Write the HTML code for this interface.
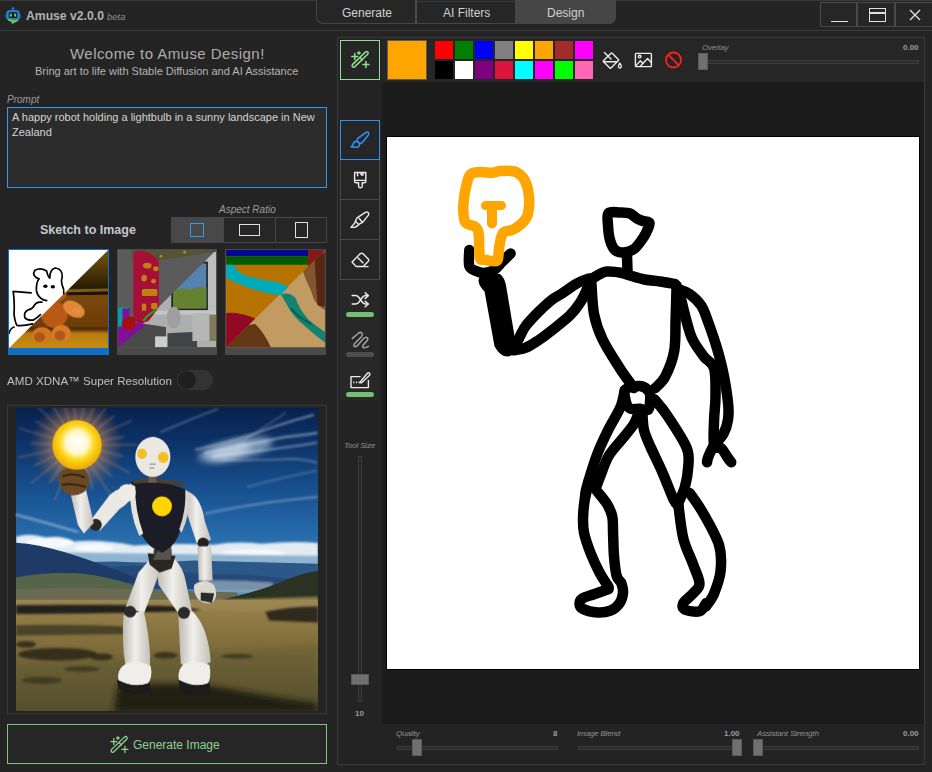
<!DOCTYPE html>
<html><head><meta charset="utf-8">
<style>
*{margin:0;padding:0;box-sizing:border-box}
html,body{width:932px;height:772px;overflow:hidden;background:#242424;font-family:"Liberation Sans",sans-serif;color:#bdbdbd}
.a{position:absolute}
.t{white-space:nowrap;position:absolute;line-height:1}
</style></head><body>
<!-- title bar -->
<div class="a" style="left:0;top:0;width:932px;height:1px;background:#3a3a3a"></div>
<div class="a" style="left:0;top:30px;width:932px;height:1px;background:#3c3c3c"></div>
<!-- logo -->
<svg class="a" style="left:2px;top:4px" width="24" height="24" viewBox="0 0 24 24">
  <circle cx="11" cy="4.6" r="1.3" fill="#1f7fd0"/>
  <path d="M4 10 Q4 6 8 6 H14 Q18 6 18 10 Q19 11.5 18.5 13 Q18.5 15 16 15.2 H6 Q3.5 15 3.5 13 Q3 11.5 4 10Z" fill="#1f7fd0"/>
  <rect x="6.8" y="8.3" width="8.4" height="5.6" rx="1" fill="#1b1b1b"/>
  <rect x="7.9" y="9.6" width="1.9" height="3.2" rx="0.8" fill="#6cc46c"/>
  <rect x="12.1" y="9.6" width="1.9" height="3.2" rx="0.8" fill="#6cc46c"/>
  <path d="M4.8 14.8 Q11 16.2 17.2 15 Q16.4 17.6 13.2 18.4 L9.4 20.2 L10 18.3 Q6.2 17.4 4.8 14.8Z" fill="#6cc46c"/>
</svg>
<div class="t" style="left:26px;top:10px;font-size:12.2px;font-weight:bold;color:#b0b0b0">Amuse v2.0.0</div><div class="t" style="left:107px;top:12px;font-size:9.5px;font-style:italic;color:#8e8e8e">beta</div>
<!-- tabs -->
<div class="a" style="left:316px;top:-1px;width:300px;height:25px;border:1px solid #464646;border-top:none;border-radius:0 0 7px 7px;background:#262626"></div>
<div class="a" style="left:415px;top:0;width:2px;height:24px;background:#4a4a4a"></div><div class="a" style="left:417px;top:1px;width:98px;height:1px;background:#3a3a3a"></div>
<div class="a" style="left:515px;top:0;width:101px;height:24px;background:#464646;border-radius:0 0 7px 0"></div>
<div class="t" style="left:342px;top:7px;font-size:12px;color:#d0d0d0">Generate</div>
<div class="t" style="left:443px;top:7px;font-size:12px;color:#d0d0d0">AI Filters</div>
<div class="t" style="left:547px;top:7px;font-size:12px;color:#d0d0d0">Design</div>
<!-- window buttons -->
<div class="a" style="left:820px;top:2px;width:38px;height:25px;border:1px solid #4a4a4a;border-right-width:2px;background:#262626"></div>
<div class="a" style="left:857px;top:2px;width:39px;height:25px;border:1px solid #4a4a4a;border-right-width:2px;background:#262626"></div>
<div class="a" style="left:895px;top:2px;width:40px;height:25px;border:1px solid #4a4a4a;background:#262626"></div>
<div class="a" style="left:831px;top:21px;width:17px;height:1px;background:#e0e0e0"></div>
<div class="a" style="left:869px;top:8px;width:17px;height:14px;border:1.5px solid #e0e0e0"></div>
<div class="a" style="left:870px;top:12px;width:15px;height:1.5px;background:#e0e0e0"></div>
<svg class="a" style="left:909px;top:9px" width="12" height="12" viewBox="0 0 12 12"><path d="M1 1L11 11M11 1L1 11" stroke="#e0e0e0" stroke-width="1.4"/></svg>

<!-- LEFT PANEL -->
<div class="t" style="left:70px;top:46px;font-size:15px;letter-spacing:0.45px;color:#acacac">Welcome to Amuse Design!</div>
<div class="t" style="left:35px;top:66px;font-size:11px;color:#b4b4b4">Bring art to life with Stable Diffusion and AI Assistance</div>
<div class="t" style="left:7px;top:95px;font-size:10px;font-style:italic;color:#9a9a9a">Prompt</div>
<div class="a" style="left:7px;top:107px;width:320px;height:81px;border:1px solid #3496ec;background:#2c2c2c"></div>
<div class="a" style="left:12px;top:110px;width:312px;font-size:11px;line-height:15px;color:#d4d4d4">A happy robot holding a lightbulb in a sunny landscape in New Zealand</div>

<div class="t" style="left:40px;top:224px;font-size:12.5px;font-weight:bold;color:#c4c8d0">Sketch to Image</div>
<div class="t" style="left:219px;top:205px;font-size:10px;font-style:italic;color:#9a9a9a">Aspect Ratio</div>
<div class="a" style="left:171px;top:217px;width:156px;height:26px;border:1px solid #464646;background:#262626"></div>
<div class="a" style="left:172px;top:218px;width:51px;height:24px;background:#484848"></div>
<div class="a" style="left:223px;top:217px;width:1px;height:26px;background:#464646"></div>
<div class="a" style="left:275px;top:217px;width:1px;height:26px;background:#464646"></div>
<div class="a" style="left:190px;top:223px;width:14px;height:14px;border:1.5px solid #2f9cf0"></div>
<div class="a" style="left:239px;top:224px;width:21px;height:12px;border:1.5px solid #e0e0e0"></div>
<div class="a" style="left:295px;top:222px;width:13px;height:16px;border:1.5px solid #e0e0e0"></div>

<!-- cards -->
<div class="a" style="left:8px;top:249px;width:101px;height:106px;background:#0f6fc6"></div><div class="a" style="left:117px;top:249px;width:100px;height:106px;background:#4a4a4a"></div><div class="a" style="left:225px;top:249px;width:101px;height:106px;background:#4a4a4a"></div><svg class="a" style="left:0;top:240px" width="120" height="120" viewBox="0 0 772 772"><defs><clipPath id="c1"><rect x="58" y="65" width="637" height="630"/></clipPath>
<linearGradient id="c1bg" x1="0" y1="0" x2="0" y2="1"><stop offset="0" stop-color="#8a6410"/><stop offset="0.2" stop-color="#5a420a"/><stop offset="0.4" stop-color="#2a1c04"/><stop offset="0.45" stop-color="#7a4a0c"/><stop offset="0.75" stop-color="#6a3a08"/><stop offset="0.78" stop-color="#b87c10"/><stop offset="1" stop-color="#d49a18"/></linearGradient>
<filter id="c1b"><feGaussianBlur stdDeviation="3"/></filter></defs><g clip-path="url(#c1)"><rect x="0" y="0" width="772" height="772" fill="url(#c1bg)"/><path d="M420 318 L700 312 L700 332 L420 336Z" fill="#8a6a18" opacity="0.8"/><path d="M420 336 L700 332 L700 352 L420 356Z" fill="#1e1204"/><path d="M58 560 L700 560 L700 575 L58 575Z" fill="#4a2a06" opacity="0.8"/><g filter="url(#c1b)"><ellipse cx="350" cy="480" rx="85" ry="85" fill="#b85a18"/><ellipse cx="360" cy="340" rx="70" ry="60" fill="#b05a1a"/><ellipse cx="475" cy="445" rx="75" ry="48" transform="rotate(30 475 445)" fill="#e08838"/><ellipse cx="270" cy="612" rx="65" ry="52" fill="#d07424"/><ellipse cx="395" cy="600" rx="62" ry="55" fill="#d87a28"/><ellipse cx="255" cy="625" rx="35" ry="30" fill="#a04a14" opacity="0.7"/><ellipse cx="385" cy="615" rx="35" ry="32" fill="#a04c14" opacity="0.7"/><ellipse cx="495" cy="455" rx="30" ry="20" fill="#e89040" opacity="0.7"/></g><path d="M58 65 L695 65 L58 695Z" fill="#ffffff"/><g fill="none" stroke="#000" stroke-width="11" stroke-linecap="round" stroke-linejoin="round"><path d="M250 250 Q200 230 225 195 Q260 175 300 200 Q310 240 320 245 Q320 190 355 180 Q405 185 400 240 Q390 265 400 290 Q415 320 410 345"/><path d="M250 250 Q230 280 235 330 Q245 370 280 385 L300 390"/><path d="M270 400 Q230 395 215 430 Q200 450 180 450 Q150 465 160 500 Q175 520 215 515 Q240 500 260 480"/><path d="M85 330 L200 340 M85 330 Q95 400 90 480 Q100 540 110 550 Q150 555 210 540 M90 560 Q65 570 58 600"/></g><ellipse cx="292" cy="297" rx="14" ry="11" fill="#000"/><ellipse cx="340" cy="301" rx="14" ry="11" fill="#000"/></g></svg><svg class="a" style="left:110px;top:240px" width="120" height="120" viewBox="0 0 772 772"><defs><clipPath id="c2"><rect x="52" y="65" width="631" height="625"/></clipPath><filter id="c2b"><feGaussianBlur stdDeviation="4"/></filter></defs><g clip-path="url(#c2)"><rect x="0" y="0" width="772" height="772" fill="#606060"/><g filter="url(#c2b)"><rect x="52" y="65" width="631" height="625" fill="#b8b8b8"/><rect x="395" y="140" width="235" height="310" fill="#1a1a1a"/><rect x="405" y="150" width="215" height="290" fill="#5a8ab8"/><path d="M405 330 Q450 300 520 320 Q580 290 620 310 L620 440 L405 440Z" fill="#6a8a30"/><rect x="630" y="65" width="53" height="400" fill="#c8c8c8"/><rect x="250" y="455" width="433" height="25" fill="#d0d0d0"/><path d="M230 540 L360 560 L360 690 L52 690 L52 600Z" fill="#505050"/><path d="M290 620 L370 620 L370 690 L290 690Z" fill="#d8d8d8"/><ellipse cx="410" cy="500" rx="45" ry="70" fill="#a8a8a8"/><path d="M370 600 L560 590 L560 690 L370 690Z" fill="#444850"/><rect x="530" y="470" width="110" height="180" fill="#c0c0c0"/><rect x="640" y="480" width="43" height="170" fill="#8a8060"/></g><path d="M52 65 L683 65 L52 690Z" fill="#606060"/><path d="M140 65 L683 65 L683 75 L320 130 L140 130Z" fill="#5a5838"/><path d="M150 90 Q160 65 200 68 Q290 90 315 140 L315 430 Q290 470 250 520 L200 540 Q150 530 150 480Z" fill="#b0103a"/><g fill="#c88a18"><ellipse cx="240" cy="165" rx="28" ry="18"/><ellipse cx="295" cy="185" rx="18" ry="16"/><ellipse cx="220" cy="245" rx="18" ry="22"/><ellipse cx="280" cy="265" rx="15" ry="15"/><rect x="205" y="315" width="100" height="45" rx="10"/><rect x="205" y="410" width="28" height="45"/><rect x="265" y="405" width="40" height="40" rx="8"/><circle cx="328" cy="105" r="9"/><circle cx="480" cy="77" r="10"/></g><path d="M52 435 L120 435 L120 560 L52 560Z" fill="#00a8b8"/><path d="M80 440 L125 440 L125 520 L80 520Z" fill="#8a10a0"/><path d="M52 560 L200 530 L230 545 L52 690Z" fill="#8a10a0"/><path d="M80 520 Q110 480 160 500 Q175 560 140 580 Q90 580 75 545Z" fill="#b01010"/><path d="M215 520 Q250 470 300 450" stroke="#20b020" stroke-width="14" fill="none"/></g><rect x="52" y="65" width="631" height="625" fill="#000" opacity="0.05"/></svg><svg class="a" style="left:218px;top:240px" width="120" height="120" viewBox="0 0 772 772"><defs><clipPath id="c3"><rect x="52" y="65" width="636" height="625"/></clipPath><filter id="c3b"><feGaussianBlur stdDeviation="5"/></filter></defs><g clip-path="url(#c3)"><g filter="url(#c3b)"><rect x="0" y="0" width="772" height="772" fill="#cca468"/><path d="M540 65 L688 65 L688 450 Q620 420 600 330 Q560 250 540 180Z" fill="#8a5a30"/><path d="M620 100 L688 80 L688 430 L640 420Z" fill="#5a2a18"/><path d="M405 350 Q460 330 500 375 Q520 440 580 510 Q650 570 688 590 L688 660 Q620 610 560 555 Q470 480 440 410Z" fill="#128a78"/><path d="M470 440 Q520 500 600 540" stroke="#0a5a50" stroke-width="10" fill="none"/><path d="M52 560 Q150 560 240 540 Q300 600 340 690 L52 690Z" fill="#6a3a18"/></g><path d="M52 65 L688 65 L52 690Z" fill="#c07a00"/><path d="M52 65 L580 65 L580 105 L52 105Z" fill="#000a9a"/><path d="M52 105 L580 105 L580 160 L52 160Z" fill="#006000"/><path d="M580 65 L688 65 L580 170Z" fill="#8a1a1a"/><path d="M52 160 L105 160 Q115 210 180 230 Q300 260 380 270 L455 300 L400 355 Q290 340 180 300 Q90 270 52 240Z" fill="#00b4c4"/><path d="M52 470 Q130 460 240 505 L52 690Z" fill="#9a0a28"/></g><rect x="52" y="65" width="636" height="625" fill="#000" opacity="0.05"/></svg>

<div class="t" style="left:7px;top:375px;font-size:11.6px;color:#c0c0c0">AMD XDNA™ Super Resolution</div>
<div class="a" style="left:177px;top:370px;width:36px;height:20px;border-radius:10px;background:#333333"></div>
<div class="a" style="left:178px;top:371px;width:18px;height:18px;border-radius:9px;background:#1f1f1f"></div>

<div class="a" style="left:7px;top:405px;width:320px;height:309px;border:1px solid #3a3a3a;background:#232323"></div>
<svg class="a" style="left:14px;top:405px" width="308" height="308" viewBox="0 0 772 772"><defs>
<clipPath id="pc"><rect x="5" y="7.5" width="757" height="759.5"/></clipPath>
<linearGradient id="sky" x1="0" y1="0" x2="0" y2="1">
 <stop offset="0" stop-color="#07204c"/><stop offset="0.12" stop-color="#0d3268"/><stop offset="0.3" stop-color="#1a5594"/><stop offset="0.45" stop-color="#2a70b0"/><stop offset="0.55" stop-color="#3c8cc6"/><stop offset="1" stop-color="#5aa7d8"/></linearGradient>
<radialGradient id="glow" cx="0.5" cy="0.5" r="0.5"><stop offset="0" stop-color="#ffe0a0" stop-opacity="1"/><stop offset="0.45" stop-color="#f0a060" stop-opacity="0.55"/><stop offset="1" stop-color="#d08050" stop-opacity="0"/></radialGradient>
<radialGradient id="bulb" cx="0.5" cy="0.45" r="0.5"><stop offset="0" stop-color="#ffffff"/><stop offset="0.45" stop-color="#fff8d0"/><stop offset="0.7" stop-color="#ffd820"/><stop offset="1" stop-color="#f0b400"/></radialGradient>
<linearGradient id="field" x1="0" y1="0" x2="0" y2="1"><stop offset="0" stop-color="#9a8450"/><stop offset="0.3" stop-color="#86723e"/><stop offset="1" stop-color="#50482a"/></linearGradient>
<linearGradient id="wl" x1="0" y1="0" x2="1" y2="0"><stop offset="0" stop-color="#bdb9b2"/><stop offset="0.45" stop-color="#f2f0ec"/><stop offset="1" stop-color="#c4c0b8"/></linearGradient>
<filter id="b1" x="-20%" y="-20%" width="140%" height="140%"><feGaussianBlur stdDeviation="3"/></filter>
<filter id="b2" x="-20%" y="-20%" width="140%" height="140%"><feGaussianBlur stdDeviation="8"/></filter>
<filter id="b3" x="-20%" y="-20%" width="140%" height="140%"><feGaussianBlur stdDeviation="1.5"/></filter>
</defs><g clip-path="url(#pc)"><rect x="0" y="0" width="772" height="772" fill="url(#sky)"/><ellipse cx="555" cy="112" rx="95" ry="26" transform="rotate(-12 555 112)" fill="#d0e0ee" opacity="0.55" filter="url(#b2)"/><ellipse cx="540" cy="118" rx="55" ry="16" transform="rotate(-15 540 118)" fill="#e6eef6" opacity="0.55" filter="url(#b2)"/><g filter="url(#b1)" stroke="#dce8f4" fill="none" stroke-linecap="round"><path d="M455 112 Q560 90 650 55 Q710 35 750 25" stroke-width="5" opacity="0.5"/><path d="M480 120 Q580 100 680 80 Q730 75 758 70" stroke-width="6" opacity="0.5"/><path d="M500 128 Q600 118 690 105 Q730 100 758 95" stroke-width="5" opacity="0.45"/><path d="M520 138 Q620 140 700 135 Q740 138 758 145" stroke-width="4" opacity="0.4"/><path d="M560 100 Q620 60 680 20" stroke-width="3" opacity="0.35"/><path d="M368 68 Q430 40 510 10" stroke-width="4" opacity="0.35"/><path d="M480 272 Q600 246 760 230" stroke-width="3.5" opacity="0.6"/><path d="M5 275 Q70 292 160 318" stroke-width="5" opacity="0.55"/><path d="M585 205 Q680 180 758 165" stroke-width="3" opacity="0.35"/></g><g filter="url(#b1)"><path d="M5 330 Q40 320 80 332 Q120 326 150 342 Q220 336 300 352 Q400 346 500 350 Q560 340 620 348 Q700 340 762 346 L762 392 L5 392Z" fill="#e2ebf2"/><g fill="#ffffff" opacity="0.7"><ellipse cx="90" cy="345" rx="60" ry="12"/><ellipse cx="200" cy="358" rx="50" ry="9"/><ellipse cx="600" cy="372" rx="80" ry="10"/></g><path d="M5 368 L762 378 L762 402 L5 402Z" fill="#8fb4d2"/></g><path d="M5 398 L250 392 Q350 398 450 390 Q560 393 762 398 L762 462 L5 462Z" fill="#2c5888"/><path d="M240 408 Q320 394 420 418 Q500 428 560 424 Q640 428 700 438 L700 462 L240 462Z" fill="#26497a"/><path d="M480 440 Q560 438 650 445 L640 475 Q560 470 500 470Z" fill="#8ea4b8" opacity="0.8" filter="url(#b1)"/><path d="M5 345 Q60 348 130 370 Q200 392 260 415 Q300 432 330 445 L5 445Z" fill="#1d3b66"/><path d="M5 432 Q80 418 160 422 Q230 428 300 452 L320 470 L5 470Z" fill="#56654a"/><path d="M5 462 Q150 455 300 462 L560 470 L560 500 L5 500Z" fill="#6a6a52"/><path d="M520 488 Q600 470 660 448 Q720 420 762 416 L762 492 L520 492Z" fill="#2c3222"/><rect x="5" y="488" width="757" height="290" fill="url(#field)"/><path d="M430 490 Q600 486 762 480 L762 520 Q600 520 430 510Z" fill="#9c8752" opacity="0.8" filter="url(#b1)"/><path d="M5 502 Q200 498 380 504 Q440 508 470 514 Q380 522 5 524Z" fill="#23221a" filter="url(#b1)"/><path d="M5 552 Q150 548 300 556 L300 574 L5 578Z" fill="#3a3822" opacity="0.8" filter="url(#b1)"/><path d="M630 518 Q690 505 762 505 L762 545 Q700 542 640 540Z" fill="#2e2c1e" filter="url(#b1)"/><g fill="#2a2616" filter="url(#b1)" opacity="0.85"><ellipse cx="110" cy="625" rx="100" ry="16"/><ellipse cx="220" cy="632" rx="28" ry="9"/><ellipse cx="70" cy="690" rx="50" ry="9"/><ellipse cx="170" cy="662" rx="45" ry="7"/><ellipse cx="380" cy="628" rx="30" ry="8"/><ellipse cx="30" cy="600" rx="25" ry="8"/><ellipse cx="560" cy="630" rx="40" ry="6"/></g><path d="M5 650 Q300 640 762 600 L762 772 L5 772Z" fill="#5a5830" opacity="0.35" filter="url(#b2)"/><path d="M260 705 Q400 690 520 708 Q620 728 762 748 L762 772 L250 772Z" fill="#15130c" opacity="0.85" filter="url(#b2)"/><g stroke="#f0a870" stroke-width="5" opacity="0.25" filter="url(#b1)"><path d="M218.0 100.0 L308.0 100.0"/><path d="M216.2 114.5 L274.4 129.0"/><path d="M211.0 128.2 L290.4 170.4"/><path d="M202.6 140.1 L247.2 180.3"/><path d="M191.6 149.7 L241.9 224.4"/><path d="M178.5 156.4 L199.0 212.8"/><path d="M164.3 159.7 L173.7 249.2"/><path d="M149.6 159.4 L141.3 218.8"/><path d="M135.5 155.6 L101.8 239.1"/><path d="M122.7 148.5 L87.5 197.1"/><path d="M112.0 138.6 L43.1 196.4"/><path d="M104.1 126.3 L50.1 152.6"/><path d="M99.3 112.5 L11.3 131.2"/><path d="M98.0 97.9 L38.1 95.8"/><path d="M100.3 83.5 L13.8 58.7"/><path d="M106.0 70.0 L54.1 40.0"/><path d="M114.8 58.3 L50.1 -4.2"/><path d="M126.2 49.1 L94.4 -1.8"/><path d="M139.5 42.9 L111.6 -42.7"/><path d="M153.8 40.1 L149.6 -19.7"/><path d="M168.4 40.9 L184.0 -47.7"/><path d="M182.4 45.2 L206.8 -9.6"/><path d="M194.9 52.7 L250.3 -18.2"/><path d="M205.3 63.1 L252.6 26.1"/><path d="M212.8 75.6 L295.0 39.0"/><path d="M217.1 89.6 L276.2 79.2"/></g><circle cx="158" cy="100" r="115" fill="url(#glow)"/><g filter="url(#b3)"><path d="M343 384 L370 406 L326 522 L280 506 L312 420Z" fill="url(#wl)"/><path d="M274 527 L325 516 Q338 570 341 627 L341 655 Q310 662 279 650 Q270 600 274 527Z" fill="url(#wl)"/><path d="M262 690 Q256 660 285 646 Q320 640 343 655 Q348 685 335 698 Q300 710 262 690Z" fill="#f0eeea"/><path d="M258 688 Q300 712 340 696 L342 716 Q300 730 262 712Z" fill="#1a1a1a"/><circle cx="291" cy="518" r="15" fill="#2a2a2a"/><path d="M357 393 L402 385 Q425 410 430 440 L446 516 L412 522 L362 450Z" fill="url(#wl)"/><path d="M412 530 L446 516 Q470 540 480 572 Q492 610 493 644 L458 660 L418 649Z" fill="url(#wl)"/><path d="M413 690 Q408 660 430 646 Q470 640 490 652 Q496 685 485 698 Q450 710 413 690Z" fill="#f0eeea"/><path d="M412 688 Q455 712 490 696 L490 720 Q450 732 416 714Z" fill="#1a1a1a"/><circle cx="426" cy="521" r="15" fill="#2a2a2a"/><path d="M335 372 L405 378 L395 410 L365 420 L340 400Z" fill="#2b2620"/><path d="M350 362 L395 362 L395 385 L350 385Z" fill="#3a3630"/><path d="M428 214 Q468 224 478 290 L494 338 L458 346 L440 292 Q424 250 428 214Z" fill="url(#wl)"/><circle cx="474" cy="346" r="14" fill="#232323"/><path d="M460 354 L494 354 L498 440 L463 440Z" fill="url(#wl)"/><path d="M452 450 Q480 430 502 452 Q514 482 496 496 Q470 500 458 482 Q448 465 452 450Z" fill="#dcd8d2"/><path d="M468 470 L502 472 L496 496 L468 490Z" fill="#2b2b2b"/><path d="M370 350 L395 350 L392 388 L348 388Z" fill="#55524c"/><path d="M292 193 Q360 182 430 212 Q432 260 418 308 Q410 350 372 370 Q335 358 318 320 Q295 270 292 193Z" fill="#1d1a26"/><path d="M290 196 L304 204 Q302 262 324 322 L314 328 Q288 272 290 196Z" fill="#e8e4dc"/><path d="M430 212 L440 222 Q440 280 420 320 L414 312 Q432 262 430 212Z" fill="#d8d4cc"/><path d="M300 188 Q360 178 428 196 L428 205 Q360 190 300 198Z" fill="#4a4030"/><circle cx="371" cy="254" r="25" fill="#ffd400"/><path d="M300 205 Q260 205 240 225 L195 285 L215 315 L265 260 Q300 240 300 205Z" fill="#ebe8e2"/><circle cx="205" cy="300" r="15" fill="#2a2622"/><path d="M140 215 L180 210 L200 295 L175 322 L160 300Z" fill="url(#wl)"/><circle cx="283" cy="220" r="22" fill="#efece6"/><path d="M112 172 Q130 150 165 156 Q195 168 186 205 Q172 230 140 226 Q110 215 112 172Z" fill="#6b4a25"/><path d="M122 178 Q150 168 178 182 M120 200 Q150 195 180 205" stroke="#3a2410" stroke-width="5" fill="none"/><circle cx="158" cy="100" r="62" fill="url(#bulb)"/><rect x="337" y="175" width="20" height="20" fill="#6a5a48"/><ellipse cx="348" cy="130" rx="44" ry="50" fill="#ebe8e2"/><ellipse cx="321" cy="122" rx="12" ry="13" fill="#f2c020"/><ellipse cx="374" cy="131" rx="13" ry="14" fill="#f2c020"/><path d="M340 148 L355 148 M340 158 L352 158" stroke="#8a8070" stroke-width="3"/></g></g></svg>

<div class="a" style="left:7px;top:724px;width:320px;height:40px;border:1px solid #7cc77c;background:#262626"></div>
<div class="t" style="left:133px;top:739px;font-size:12px;color:#8fd18f">Generate Image</div>
<svg class="a" style="left:99px;top:725px" width="40" height="40" viewBox="0 0 40 40" fill="none" stroke="#8fd18f" stroke-width="1.3" stroke-linecap="round">
  <path d="M12.4 24.6 L25.6 11.9 Q26.8 11 27.9 12.1 Q28.6 13.2 27.7 14.2 L14.6 26.9 Q13.4 27.8 12.5 26.8 Q11.8 25.7 12.4 24.6Z"/>
  <path d="M20.2 17.8 L22.3 19.9"/>
  <path d="M14.8 13.6 V19.6 M11.8 16.6 H17.8"/>
  <path d="M18.9 11.7 V14.3 M17.6 13 H20.2"/>
  <path d="M25.9 21.4 V27.4 M22.9 24.4 H28.9"/>
</svg>

<!-- RIGHT PANEL -->
<div class="a" style="left:337px;top:37px;width:588px;height:728px;border:1px solid #3a3a3a;background:#232323"></div>
<div class="a" style="left:382px;top:38px;width:542px;height:44px;background:#262626"></div>
<div class="a" style="left:382px;top:82px;width:542px;height:642px;background:#1c1c1c"></div>
<div class="a" style="left:386px;top:136px;width:534px;height:534px;border:1px solid #000;background:#ffffff"></div>

<!-- tool column buttons -->
<div class="a" style="left:340px;top:40px;width:40px;height:40px;border:1px solid #90e090;background:#262626"></div>
<svg class="a" style="left:340px;top:40px" width="40" height="40" viewBox="0 0 40 40" fill="none" stroke="#90e090" stroke-width="1.5" stroke-linecap="round">
  <path d="M12.4 24.6 L25.6 11.9 Q26.8 11 27.9 12.1 Q28.6 13.2 27.7 14.2 L14.6 26.9 Q13.4 27.8 12.5 26.8 Q11.8 25.7 12.4 24.6Z"/>
  <path d="M20.2 17.8 L22.3 19.9"/>
  <path d="M14.8 13.6 V19.6 M11.8 16.6 H17.8"/>
  <path d="M18.9 11.7 V14.3 M17.6 13 H20.2"/>
  <path d="M25.9 21.4 V27.4 M22.9 24.4 H28.9"/>
</svg>
<div class="a" style="left:340px;top:120px;width:40px;height:40px;border:1px solid #2f8ff0;background:#262626"></div>
<svg class="a" style="left:340px;top:120px" width="40" height="40" viewBox="0 0 40 40" fill="none" stroke="#3090f5" stroke-width="1.6" stroke-linejoin="round" stroke-linecap="round">
  <path d="M17.6 18.6 L26 12.4 Q28 11.4 28.6 13 Q29 14 28.2 15.2 L22.2 22.6 Q21 23.7 19.8 23.2"/>
  <path d="M17.6 18.6 Q16.6 20.6 17.8 22 Q19 23.4 19.8 23.2"/>
  <path d="M17.6 21.6 Q14.5 20.8 13.3 23.4 Q13 25.6 11.1 26.9 L17.5 27.3 Q19.3 26.7 19.5 24"/>
</svg>
<div class="a" style="left:340px;top:160px;width:40px;height:40px;border:1px solid #4a4a4a;border-top:none;background:#262626"></div>
<svg class="a" style="left:340px;top:160px" width="40" height="40" viewBox="0 0 40 40" fill="none" stroke="#ececec" stroke-width="1.4" stroke-linejoin="round">
  <path d="M14.6 12.5 H25.8 V21.4 Q25.8 22.8 24.4 22.8 H22.2 V26.4 Q22.2 27.8 20.4 27.8 Q18.6 27.8 18.6 26.4 V22.8 H16 Q14.6 22.8 14.6 21.4Z"/>
  <path d="M14.8 20.4 H25.6 M17.6 12.8 V16.2 M21 12.8 V15 M21 15 H23 V12.8"/>
</svg>
<div class="a" style="left:340px;top:200px;width:40px;height:40px;border:1px solid #4a4a4a;border-top:none;background:#262626"></div>
<svg class="a" style="left:340px;top:200px" width="40" height="40" viewBox="0 0 40 40" fill="none" stroke="#ececec" stroke-width="1.4" stroke-linejoin="round">
  <path d="M17 17.8 L25.4 12.4 Q27.6 11.3 28.6 13.2 Q29 14.3 28.2 15.4 L22.6 22.4 L19.6 23.8 L18 25.4 L15.2 27.2 L11 27.4 L14.6 23.2 L15.6 20.8Z"/>
  <path d="M18.8 18 L22.4 22.2 M15.6 21.2 L18.6 24.6"/>
</svg>
<div class="a" style="left:340px;top:240px;width:40px;height:40px;border:1px solid #4a4a4a;border-top:none;background:#262626"></div>
<svg class="a" style="left:340px;top:240px" width="40" height="40" viewBox="0 0 40 40" fill="none" stroke="#ececec" stroke-width="1.4" stroke-linejoin="round">
  <path d="M12.6 21.4 L20.4 13.6 Q21.6 12.6 22.8 13.6 L28.2 19 Q29.2 20.2 28.2 21.4 L23.2 26.4 H16.2 L12.6 22.8 Q11.8 22 12.6 21.4Z"/>
  <path d="M17.6 17.4 L23.4 23.2 M16 26.6 H28.6"/>
</svg>
<div class="a" style="left:340px;top:280px;width:40px;height:40px;background:#282828"></div>
<svg class="a" style="left:340px;top:280px" width="40" height="40" viewBox="0 0 40 40" fill="none" stroke="#ececec" stroke-width="1.5" stroke-linecap="round" stroke-linejoin="round">
  <path d="M12.2 15.6 H15.6 Q17.8 15.6 19.4 18 L22 21.8 Q23.6 24 25.6 24 H28.2"/>
  <path d="M12.2 24 H15.6 Q17.8 24 19.4 21.6 L22 17.8 Q23.6 15.6 25.6 15.6 H28.2"/>
  <path d="M25.2 12.8 L28.2 15.6 L25.2 18.4 M25.2 21.2 L28.2 24 L25.2 26.8"/>
</svg>
<div class="a" style="left:346px;top:312px;width:28px;height:5px;border-radius:3px;background:#74bf6f"></div>
<div class="a" style="left:340px;top:320px;width:40px;height:40px;background:#282828"></div>
<svg class="a" style="left:340px;top:320px" width="40" height="40" viewBox="0 0 40 40" fill="none" stroke="#a0a0a0" stroke-width="1.5" stroke-linecap="round" stroke-linejoin="round">
  <path d="M12.4 18.4 L18.4 13.2 Q20.6 11.6 22 13.2 Q23 14.6 21.6 16.4 L15 23.2 Q13 25.4 14.4 26.4 Q15.8 27.2 17.6 25.4 L23.6 18.6 Q25.4 16.4 27.2 17.6 Q28.6 19 27 20.8 L23.4 24.8 Q21.6 27.4 24 27.8 Q26 27.6 28.4 26.4"/>
</svg>
<div class="a" style="left:346px;top:352px;width:28px;height:5px;border-radius:3px;background:#4d4d4d"></div>
<div class="a" style="left:340px;top:360px;width:40px;height:40px;background:#282828"></div>
<svg class="a" style="left:340px;top:360px" width="40" height="40" viewBox="0 0 40 40" fill="none" stroke="#ececec" stroke-width="1.4" stroke-linejoin="round">
  <path d="M20.6 16.6 H11 V27.6 H28.4 V20"/>
  <path d="M19.6 22.6 L27.4 13.2 Q28.4 12.2 29.6 13.2 Q30.4 14.2 29.6 15.2 L21.6 22.8Z"/>
  <path d="M13.2 22.4 H14.4 M16 22.4 H17.2 M18.6 22.4 H19.6" stroke-width="1.6"/>
</svg>
<div class="a" style="left:346px;top:392px;width:28px;height:5px;border-radius:3px;background:#74bf6f"></div>

<!-- tool size slider -->
<div class="t" style="left:344px;top:442px;font-size:8px;font-style:italic;letter-spacing:-0.18px;color:#8e8e8e">Tool Size</div>
<div class="a" style="left:358px;top:456px;width:4px;height:246px;border:1px solid #3c3c3c;background:#262626"></div>
<div class="a" style="left:351px;top:674px;width:18px;height:11px;border:1px solid #5a5a5a;background:#707070"></div>
<div class="t" style="left:355px;top:710px;font-size:8px;font-weight:bold;color:#9a9a9a">10</div>

<!-- top toolbar -->
<div class="a" style="left:387px;top:40px;width:40px;height:40px;border:1px solid #5a5a5a;background:#FFA500"></div>
<div class="a" style="left:435px;top:41px;width:18px;height:18px;background:#FF0000"></div>
<div class="a" style="left:455px;top:41px;width:18px;height:18px;background:#008000"></div>
<div class="a" style="left:475px;top:41px;width:18px;height:18px;background:#0000FF"></div>
<div class="a" style="left:495px;top:41px;width:18px;height:18px;background:#808080"></div>
<div class="a" style="left:515px;top:41px;width:18px;height:18px;background:#FFFF00"></div>
<div class="a" style="left:535px;top:41px;width:18px;height:18px;background:#FFA500"></div>
<div class="a" style="left:555px;top:41px;width:18px;height:18px;background:#A52A2A"></div>
<div class="a" style="left:575px;top:41px;width:18px;height:18px;background:#FF00FF"></div>
<div class="a" style="left:435px;top:61px;width:18px;height:18px;background:#000000"></div>
<div class="a" style="left:455px;top:61px;width:18px;height:18px;background:#FFFFFF"></div>
<div class="a" style="left:475px;top:61px;width:18px;height:18px;background:#800080"></div>
<div class="a" style="left:495px;top:61px;width:18px;height:18px;background:#DC143C"></div>
<div class="a" style="left:515px;top:61px;width:18px;height:18px;background:#00FFFF"></div>
<div class="a" style="left:535px;top:61px;width:18px;height:18px;background:#FF00FF"></div>
<div class="a" style="left:555px;top:61px;width:18px;height:18px;background:#00FF00"></div>
<div class="a" style="left:575px;top:61px;width:18px;height:18px;background:#FF69B4"></div>
<svg class="a" style="left:598px;top:44px" width="90" height="30" viewBox="598 44 90 30" fill="none" stroke-linejoin="round" stroke-linecap="round">
  <g stroke="#ececec" stroke-width="1.4">
    <path d="M603.6 60.6 L611 53.2 Q611.6 52.6 612.2 53.2 L618.4 59.4 Q619 60 618.4 60.6 L611 68 Q610.4 68.6 609.8 68 L603.6 61.8 Q603 61.2 603.6 60.6Z"/>
    <path d="M603.6 61.8 H616.4 M604.4 52.4 L611 59"/>
    <path d="M619.8 63.2 Q618 66 618.4 67 Q619 68.2 620.2 68 Q621.6 67.6 621.2 66 Q620.8 64.8 619.8 63.2Z"/>
    <rect x="635.4" y="53.4" width="16" height="13.2" rx="0.8"/>
    <circle cx="639.6" cy="56.6" r="1.3"/>
    <path d="M636 65.6 L640.4 60.8 L642.6 63.4 M640 66.6 L647.6 58.6 L651.2 62.4"/>
  </g>
  <circle cx="673.5" cy="60" r="7.5" stroke="#ff2020" stroke-width="1.8"/>
  <path d="M668.4 54.8 L678.6 65.2" stroke="#ff2020" stroke-width="1.8"/>
</svg>
<div class="t" style="left:702px;top:44px;font-size:8px;font-style:italic;letter-spacing:-0.18px;color:#8e8e8e">Overlay</div>
<div class="t" style="left:903px;top:44px;font-size:8px;font-weight:bold;color:#9a9a9a">0.00</div>
<div class="a" style="left:700px;top:60px;width:219px;height:4px;border:1px solid #3c3c3c;background:#2c2c2c"></div>
<div class="a" style="left:698px;top:53px;width:10px;height:17px;border:1px solid #5a5a5a;background:#707070"></div>

<!-- bottom sliders -->
<div class="t" style="left:396px;top:730px;font-size:8px;font-style:italic;letter-spacing:-0.18px;color:#8e8e8e">Quality</div>
<div class="t" style="left:553px;top:730px;font-size:8px;font-weight:bold;color:#9a9a9a">8</div>
<div class="a" style="left:397px;top:746px;width:161px;height:4px;border:1px solid #3c3c3c;background:#2c2c2c"></div>
<div class="a" style="left:412px;top:739px;width:10px;height:17px;border:1px solid #5a5a5a;background:#707070"></div>
<div class="t" style="left:577px;top:730px;font-size:8px;font-style:italic;letter-spacing:-0.18px;color:#8e8e8e">Image Blend</div>
<div class="t" style="left:724px;top:730px;font-size:8px;font-weight:bold;color:#9a9a9a">1.00</div>
<div class="a" style="left:578px;top:746px;width:161px;height:4px;border:1px solid #3c3c3c;background:#2c2c2c"></div>
<div class="a" style="left:732px;top:739px;width:10px;height:17px;border:1px solid #5a5a5a;background:#707070"></div>
<div class="t" style="left:757px;top:730px;font-size:8px;font-style:italic;letter-spacing:-0.18px;color:#8e8e8e">Assistant Strength</div>
<div class="t" style="left:903px;top:730px;font-size:8px;font-weight:bold;color:#9a9a9a">0.00</div>
<div class="a" style="left:758px;top:746px;width:161px;height:4px;border:1px solid #3c3c3c;background:#2c2c2c"></div>
<div class="a" style="left:753px;top:739px;width:10px;height:17px;border:1px solid #5a5a5a;background:#707070"></div>

<svg class="a" style="left:0;top:0" width="932" height="772" viewBox="0 0 932 772"><path d="M469.3 250.0 C469.3 252.7 468.2 262.5 469.3 266.0 C470.4 269.5 473.6 269.9 476.0 271.0 C478.4 272.1 480.7 273.0 483.7 272.9 C486.7 272.8 490.8 272.1 493.8 270.3 C496.9 268.5 499.2 264.8 502.0 262.0 C504.8 259.2 509.2 254.9 510.6 253.5" fill="none" stroke="#000" stroke-width="10.5" stroke-linecap="round" stroke-linejoin="round"/><path d="M481 277 Q490 274 499.7 275 Q503.5 278 505 285.5 L514.5 342 Q516 354 508 355.5 Q501 356 495.5 346 L485.5 291 Q480 286 479.5 281 Q479.5 278 481 277Z" fill="#000" stroke="#000" stroke-width="2" stroke-linejoin="round"/><path d="M469.9 175.0 C472.0 172.3 474.7 172.5 478.5 172.1 C482.3 171.7 489.1 173.0 492.7 172.8 C496.2 172.6 496.2 171.3 499.8 171.1 C503.4 170.9 510.2 170.4 514.0 171.4 C517.8 172.4 520.5 174.7 522.6 177.1 C524.8 179.5 525.8 182.3 526.9 185.6 C528.0 188.9 528.6 193.4 529.0 197.0 C529.4 200.6 529.4 203.7 529.0 207.0 C528.6 210.3 528.2 214.2 526.9 217.0 C525.6 219.8 523.6 221.9 521.2 224.0 C518.8 226.1 515.6 228.5 512.7 229.8 C509.8 231.1 505.9 230.8 504.0 232.0 C502.1 233.2 502.1 234.2 501.3 236.9 C500.5 239.6 499.6 244.5 499.0 248.3 C498.4 252.1 498.8 257.6 497.7 259.7 C496.6 261.8 494.9 261.1 492.7 261.1 C490.4 261.1 486.3 260.2 484.2 259.7 C482.1 259.2 480.7 260.7 479.9 258.3 C479.1 255.9 479.4 249.7 479.2 245.4 C479.0 241.1 479.1 235.7 478.5 232.6 C477.9 229.5 477.7 228.7 475.6 227.0 C473.5 225.3 467.7 224.9 465.7 222.7 C463.7 220.5 463.9 217.3 463.5 214.0 C463.1 210.7 463.1 206.9 463.5 202.7 C463.9 198.4 464.6 193.1 465.7 188.5 C466.8 183.9 467.8 177.7 469.9 175.0Z" fill="none" stroke="#FFA500" stroke-width="10.5" stroke-linecap="round" stroke-linejoin="round"/><path d="M485.5 205.6 C488.2 205.6 498.8 205.6 501.5 205.6" fill="none" stroke="#FFA500" stroke-width="9" stroke-linecap="round" stroke-linejoin="round"/><path d="M492.0 207.0 C492.0 209.7 492.0 220.7 492.0 223.4" fill="none" stroke="#FFA500" stroke-width="10" stroke-linecap="round" stroke-linejoin="round"/><path d="M589.4 278.4 C587.5 279.2 582.2 280.5 577.7 283.0 C573.2 285.5 566.5 290.5 562.2 293.3 C557.9 296.1 555.7 296.8 551.8 299.8 C547.9 302.8 543.2 307.2 538.9 311.5 C534.6 315.8 529.1 321.4 525.9 325.7 C522.6 330.0 521.5 333.5 519.4 337.4 C517.3 341.3 514.5 347.1 513.5 349.0" fill="none" stroke="#000" stroke-width="10.5" stroke-linecap="round" stroke-linejoin="round"/><path d="M513.5 350.3 C515.6 349.9 521.7 349.4 525.9 347.7 C530.1 346.0 534.1 343.2 538.9 340.0 C543.6 336.8 549.2 332.4 554.4 328.3 C559.6 324.2 565.7 319.6 570.0 315.3 C574.3 311.0 577.3 307.1 580.3 302.4 C583.3 297.6 586.4 290.5 588.0 286.8 C589.6 283.1 589.7 281.1 590.0 280.0" fill="none" stroke="#000" stroke-width="10.5" stroke-linecap="round" stroke-linejoin="round"/><path d="M608.5 213.0 C610.5 210.9 616.4 212.4 620.0 212.5 C623.6 212.6 627.2 212.5 630.0 213.5 C632.8 214.5 634.8 217.2 637.0 218.5 C639.2 219.8 640.9 220.2 643.0 221.0 C645.1 221.8 649.0 221.0 649.5 223.0 C650.0 225.0 647.4 230.0 646.0 233.0 C644.6 236.0 643.0 238.3 641.0 241.0 C639.0 243.7 636.8 247.1 634.0 249.0 C631.2 250.9 627.2 252.3 624.0 252.5 C620.8 252.7 617.3 252.1 615.0 250.0 C612.7 247.9 611.2 244.2 610.0 240.0 C608.8 235.8 608.2 229.5 608.0 225.0 C607.8 220.5 606.5 215.1 608.5 213.0Z" fill="none" stroke="#000" stroke-width="10.5" stroke-linecap="round" stroke-linejoin="round"/><path d="M627.0 255.0 C627.1 257.7 627.4 268.3 627.5 271.0" fill="none" stroke="#000" stroke-width="10.5" stroke-linecap="round" stroke-linejoin="round"/><path d="M590.0 280.0 C591.7 279.0 597.2 275.4 600.0 274.0 C602.8 272.6 603.3 271.7 607.0 271.5 C610.7 271.3 618.6 272.3 622.4 273.0 C626.2 273.7 626.3 274.4 630.0 275.5 C633.7 276.6 639.4 278.5 644.4 279.5 C649.4 280.5 654.9 280.8 660.0 281.5 C665.1 282.2 672.5 283.6 675.0 284.0" fill="none" stroke="#000" stroke-width="10.5" stroke-linecap="round" stroke-linejoin="round"/><path d="M591.2 280.0 C591.7 285.7 592.1 304.1 594.0 314.0 C595.9 323.9 598.3 330.6 602.6 339.6 C606.9 348.6 614.5 360.0 619.7 368.1 C624.9 376.2 631.5 384.7 633.9 388.0" fill="none" stroke="#000" stroke-width="10.5" stroke-linecap="round" stroke-linejoin="round"/><path d="M676.6 285.5 C676.4 291.2 676.0 308.8 675.6 319.7 C675.2 330.6 675.9 341.5 674.2 351.0 C672.5 360.5 668.4 370.4 665.2 376.6 C662.1 382.8 656.9 386.1 655.3 388.0" fill="none" stroke="#000" stroke-width="10.5" stroke-linecap="round" stroke-linejoin="round"/><path d="M677.0 288.5 C679.1 289.4 685.9 291.3 689.9 294.2 C693.9 297.1 698.2 300.9 701.3 305.6 C704.4 310.4 705.8 315.6 708.4 322.7 C711.0 329.8 714.5 339.8 717.0 348.3 C719.5 356.9 721.7 365.0 723.5 374.0 C725.3 383.0 727.2 394.9 728.0 402.5 C728.8 410.1 728.8 414.4 728.0 419.6 C727.2 424.8 725.8 429.5 723.5 433.8 C721.2 438.1 716.6 441.4 714.1 445.2 C711.6 449.0 709.6 453.8 708.4 456.6 C707.2 459.5 707.2 461.4 707.0 462.3" fill="none" stroke="#000" stroke-width="10.5" stroke-linecap="round" stroke-linejoin="round"/><path d="M681.3 299.9 C682.2 303.7 685.1 316.0 687.0 322.7 C688.9 329.4 689.9 334.1 692.7 339.8 C695.6 345.5 700.5 352.1 704.1 356.9 C707.7 361.6 712.2 361.6 714.1 368.3 C716.0 375.0 715.5 388.2 715.5 396.8 C715.5 405.4 714.3 411.5 714.1 419.6 C713.9 427.7 712.9 440.4 714.1 445.2 C715.3 449.9 719.1 446.2 721.2 448.1 C723.4 450.0 725.3 454.2 727.0 456.6 C728.7 459.0 730.5 461.4 731.2 462.3" fill="none" stroke="#000" stroke-width="10.5" stroke-linecap="round" stroke-linejoin="round"/><path d="M625.6 389.5 C627.9 386.8 636.0 385.6 639.9 386.0 C643.8 386.4 647.5 389.2 649.2 391.9 C650.9 394.6 650.2 399.0 650.0 402.0 C649.8 405.0 649.8 408.8 648.0 410.0 C646.2 411.2 642.0 409.2 639.0 409.0 C636.0 408.8 632.2 409.7 630.0 408.5 C627.8 407.3 626.7 405.2 626.0 402.0 C625.3 398.8 623.3 392.2 625.6 389.5Z" fill="none" stroke="#000" stroke-width="10.5" stroke-linecap="round" stroke-linejoin="round"/><path d="M624.7 390.2 C624.0 393.0 623.2 400.6 620.5 407.0 C617.8 413.4 612.4 421.6 608.7 428.9 C605.1 436.2 601.6 443.5 598.6 450.8 C595.6 458.1 593.1 466.3 591.0 472.8 C588.9 479.3 587.0 485.8 586.0 490.0 C585.0 494.2 585.2 496.7 585.0 498.0" fill="none" stroke="#000" stroke-width="10.5" stroke-linecap="round" stroke-linejoin="round"/><path d="M639.9 408.7 C638.9 411.2 637.0 418.8 634.0 423.9 C631.0 428.9 626.4 433.7 622.2 439.0 C618.0 444.3 612.4 449.7 608.7 455.9 C605.1 462.1 602.2 471.2 600.3 476.1 C598.3 481.0 597.5 483.5 597.0 485.0" fill="none" stroke="#000" stroke-width="10.5" stroke-linecap="round" stroke-linejoin="round"/><path d="M588.6 485.4 C588.0 487.5 585.9 492.9 585.0 498.0 C584.1 503.1 583.3 510.5 583.1 516.3 C582.9 522.1 582.8 526.5 584.0 532.6 C585.2 538.7 587.8 546.0 590.4 552.6 C593.0 559.2 596.5 566.8 599.5 572.5 C602.5 578.2 607.1 584.6 608.6 587.0" fill="none" stroke="#000" stroke-width="10.5" stroke-linecap="round" stroke-linejoin="round"/><path d="M596.8 490.9 C598.4 493.0 604.1 499.4 606.7 503.6 C609.3 507.8 611.1 511.2 612.2 516.3 C613.3 521.4 612.8 527.8 613.1 534.4 C613.4 541.0 613.4 549.2 614.0 556.2 C614.6 563.2 615.5 571.7 616.7 576.2 C617.9 580.7 620.2 580.2 621.3 583.0 C622.3 585.8 623.3 589.6 623.0 593.0 C622.7 596.4 621.5 600.4 619.4 603.4 C617.3 606.4 614.0 609.2 610.4 610.7 C606.8 612.2 602.2 612.8 597.7 612.5 C593.2 612.2 586.1 610.5 583.1 609.0 C580.1 607.5 579.5 605.2 579.5 603.4 C579.5 601.6 580.7 599.5 583.1 598.0 C585.5 596.5 589.8 595.8 594.0 594.3 C598.2 592.8 606.2 589.9 608.6 589.0" fill="none" stroke="#000" stroke-width="10.5" stroke-linecap="round" stroke-linejoin="round"/><path d="M642.4 413.8 C642.7 416.6 642.7 425.0 644.1 430.6 C645.5 436.2 647.7 440.5 650.8 447.5 C653.9 454.5 658.8 464.1 662.6 472.8 C666.4 481.5 671.0 494.0 673.6 499.5 C676.2 505.0 677.7 504.9 678.5 506.0" fill="none" stroke="#000" stroke-width="10.5" stroke-linecap="round" stroke-linejoin="round"/><path d="M654.2 399.1 C656.4 401.8 661.7 407.2 667.1 415.3 C672.5 423.4 683.1 439.1 686.6 447.7 C690.1 456.3 688.5 460.6 688.2 467.1 C687.9 473.6 686.6 480.7 685.0 486.6 C683.4 492.6 679.6 500.1 678.5 502.8" fill="none" stroke="#000" stroke-width="10.5" stroke-linecap="round" stroke-linejoin="round"/><path d="M678.5 506.0 C679.3 511.4 680.9 528.7 683.3 538.4 C685.7 548.1 690.4 556.8 693.1 564.3 C695.8 571.8 699.5 578.9 699.5 583.7 C699.5 588.6 695.8 590.1 693.1 593.4 C690.4 596.6 684.6 600.5 683.3 603.2 C681.9 605.9 682.3 608.2 685.0 609.6 C687.7 611.0 696.0 612.4 699.5 611.3 C703.0 610.2 704.9 604.6 706.0 603.2" fill="none" stroke="#000" stroke-width="10.5" stroke-linecap="round" stroke-linejoin="round"/><path d="M689.8 493.1 C692.0 496.3 697.9 503.9 702.8 512.5 C707.7 521.1 716.0 535.2 719.0 544.9 C722.0 554.6 721.4 562.7 720.6 570.8 C719.8 578.9 716.5 587.5 714.1 593.4 C711.7 599.3 707.4 604.2 706.0 606.4" fill="none" stroke="#000" stroke-width="10.5" stroke-linecap="round" stroke-linejoin="round"/></svg>
</body></html>
